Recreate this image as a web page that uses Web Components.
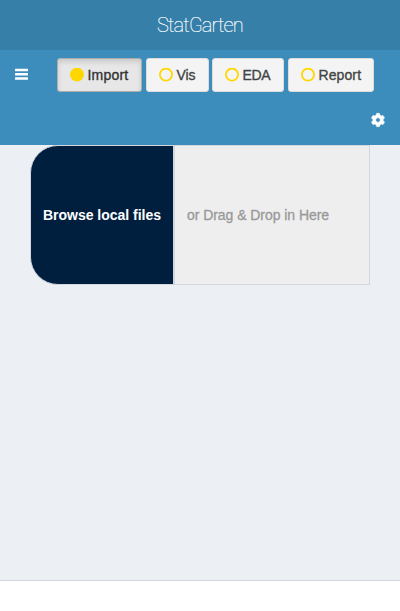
<!DOCTYPE html>
<html lang="en"><head><meta charset="utf-8"><title>StatGarten</title>
<style>body{margin:0;font-family:"Liberation Sans",Arial,sans-serif;font-size:14px}</style></head><body>
<stat-app></stat-app>
<script>
class Base extends HTMLElement{
  connectedCallback(){ if(!this.shadowRoot) this.attachShadow({mode:"open"}).innerHTML=this.view(); }
}
customElements.define("app-logo",class extends Base{view(){return `<style>
:host{display:flex;height:50px;background:#367fa9;color:#fff;align-items:center;justify-content:center}
span{font:100 20px/50px Roboto,"Liberation Sans",sans-serif;letter-spacing:-.8px;-webkit-text-stroke:.2px #fff;white-space:nowrap}
</style><span><slot></slot></span>`}});
customElements.define("tab-button",class extends Base{view(){
const on=this.hasAttribute("active");
return `<style>
:host{display:flex;box-sizing:border-box;height:34px;border:1px solid #ddd;border-radius:3px;background:#f4f4f4;color:#444;padding-left:12px;align-items:center;line-height:20px}
:host([active]){background:#e7e7e7;border-color:#adadad;color:#333;box-shadow:inset 0 3px 5px rgba(0,0,0,.125)}
svg{display:block;flex:none;margin-right:3.5px}
span{-webkit-text-stroke:.35px currentColor;letter-spacing:var(--ls,.2px);white-space:nowrap}
</style><svg width="14" height="14" viewBox="0 0 14 14"><circle cx="7" cy="6.6" r="${on?7:6.1}" fill="${on?"#ffd700":"none"}" stroke="#ffd700" stroke-width="${on?0:1.8}"/></svg><span><slot></slot></span>`}});
customElements.define("nav-bar",class extends Base{view(){return `<style>
:host{display:grid;box-sizing:border-box;height:95px;background:#3c8dbc;grid-template:34px 53px/57px 1fr;padding-top:8px}
.menu{padding:10px 0 0 14.5px}svg{display:block;overflow:visible}
.tabs{display:grid;grid-template-columns:85px 4px 63px 3px 72px 4px 86px}
.vis{grid-column:3}.eda{grid-column:5}.report{grid-column:7}
.gear{grid-column:2;justify-self:end;padding:20.5px 15px 0 0}
</style><div class="menu"><svg width="13" height="12" viewBox="0 0 13 12" fill="#fff"><rect y=".8" width="13" height="2.4" rx=".5"/><rect y="5" width="13" height="2.4" rx=".5"/><rect y="9.300" width="13" height="2.400" rx=".5"/></svg></div>
<div class="tabs"><tab-button active>Import</tab-button><tab-button class="vis" style="--ls:-.1px">Vis</tab-button><tab-button class="eda" style="--ls:-.3px">EDA</tab-button><tab-button class="report" style="--ls:.1px">Report</tab-button></div>
<div class="gear"><svg width="14" height="14" viewBox="0 0 512 512"><path fill="#fff" stroke="#fff" stroke-width="18" d="M487.400 315.700l-42.600-24.600c4.300-23.200 4.300-47 0-70.200l42.600-24.600c4.900-2.800 7.100-8.600 5.500-14-11.100-35.600-30-67.800-54.700-94.600-3.800-4.100-10-5.100-14.800-2.300L380.800 110c-17.900-15.400-38.500-27.300-60.800-35.100V25.800c0-5.600-3.900-10.500-9.400-11.700-36.700-8.200-74.300-7.800-109.200 0-5.500 1.200-9.400 6.100-9.400 11.700V75c-22.200 7.900-42.800 19.800-60.800 35.100L88.700 85.500c-4.900-2.800-11-1.900-14.800 2.300-24.700 26.700-43.600 58.900-54.700 94.600-1.700 5.400.6 11.200 5.500 14L67.300 221c-4.300 23.200-4.300 47 0 70.200l-42.600 24.600c-4.900 2.800-7.100 8.600-5.500 14 11.100 35.600 30 67.800 54.700 94.600 3.800 4.100 10 5.100 14.800 2.300l42.600-24.600c17.900 15.400 38.500 27.300 60.800 35.100v49.200c0 5.600 3.900 10.500 9.400 11.700 36.700 8.200 74.300 7.800 109.200 0 5.500-1.200 9.400-6.100 9.400-11.700v-49.200c22.200-7.900 42.800-19.800 60.800-35.100l42.600 24.600c4.900 2.800 11 1.900 14.800-2.300 24.700-26.700 43.600-58.900 54.700-94.600 1.500-5.500-.7-11.300-5.600-14.100zM256 336c-44.100 0-80-35.900-80-80s35.900-80 80-80 80 35.900 80 80-35.900 80-80 80z"/></svg></div>`}});
customElements.define("file-drop",class extends Base{view(){return `<style>
:host{display:flex;box-sizing:border-box;width:340px;height:140px;margin-left:30px}
div{box-sizing:border-box;display:flex;align-items:center;padding-left:12px;border:1px solid #d2d6de;white-space:nowrap}
.browse{width:144px;background:#001f3f;color:#fff;border-radius:28px 0 0 28px;font-weight:700;letter-spacing:-.02px}
.drop{width:196px;background:#eee;color:#999;-webkit-text-stroke:.3px #999;letter-spacing:-.05px}
</style><div class="browse"><slot name="browse"></slot></div><div class="drop"><slot name="drop"></slot></div>`}});
customElements.define("stat-app",class extends Base{view(){return `<style>
:host{display:flex;flex-direction:column;height:611px;background:#fff}
main{height:435px;background:#ecf0f5;border-bottom:1px solid #d2d6de}
</style><app-logo>StatGarten</app-logo><nav-bar></nav-bar><main><file-drop><span slot="browse">Browse local files</span><span slot="drop">or Drag &amp; Drop in Here</span></file-drop></main>`}});
</script></body></html>
